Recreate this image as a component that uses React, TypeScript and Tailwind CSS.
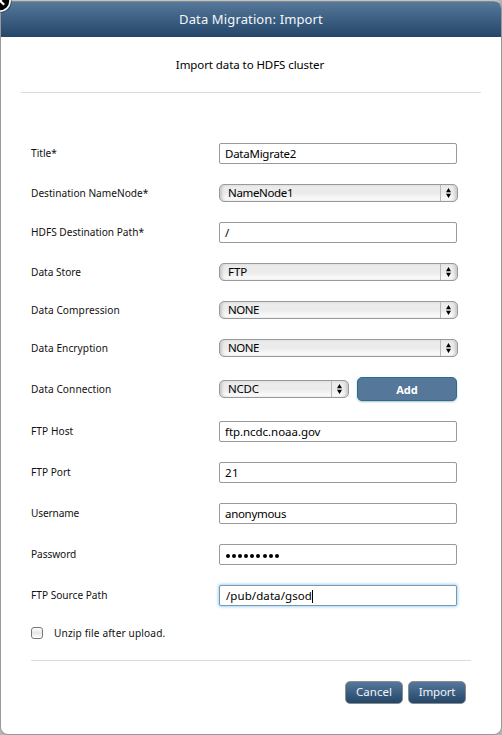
import React from 'react';

const labelFont = "font-['Noto_Sans',sans-serif] text-[11px] leading-none whitespace-nowrap text-[#111] origin-left scale-x-92 -translate-y-px";

function Row({ label, tracking = '', children }: { label: string; tracking?: string; children: React.ReactNode }) {
  return (
    <div className="flex items-center">
      <span className={`w-[188px] shrink-0 ${labelFont} ${tracking}`}>{label}</span>
      {children}
    </div>
  );
}

function Field({ value, tracking = '', focused = false }: { value: string; tracking?: string; focused?: boolean }) {
  return (
    <div
      className={`flex h-[21px] w-[238px] items-center rounded-[2px] border bg-white pt-px text-[11.5px] leading-none text-black ${
        focused ? 'border-[#7d98ad] pl-[6px] shadow-[0_0_3px_1px_#a4d5fa]' : 'border-[#999] pl-[5px]'
      }`}
    >
      <span className={`whitespace-nowrap ${tracking}`}>{value}</span>
      {focused && <span className="h-[13px] w-px bg-black" />}
    </div>
  );
}

function PasswordField() {
  return (
    <div className="flex h-[21px] w-[238px] items-center gap-[2.1px] rounded-[2px] border border-[#999] bg-white pt-[3px] pl-[6px]">
      {Array.from({ length: 9 }, (_, i) => (
        <span key={i} className="size-[4px] rounded-full bg-black" />
      ))}
    </div>
  );
}

function Select({ value, width = 'w-[239px]', tracking = '' }: { value: string; width?: string; tracking?: string }) {
  return (
    <div
      className={`flex h-[18px] items-stretch overflow-hidden rounded-[5px] border border-[#999] bg-linear-to-b from-[#ececec] via-[#ebebeb] to-white shadow-[inset_3px_0_3px_-1px_#c8c8c8,inset_-3px_0_3px_-1px_#c8c8c8] ${width}`}
    >
      <span className={`flex flex-1 items-center pl-[8px] text-[11.5px] leading-none text-black ${tracking}`}>{value}</span>
      <span className="flex w-[17px] items-center justify-center border-l border-[#b9b9b9] pr-px">
        <svg width="5" height="10" viewBox="0 0 5 10">
          <path d="M2.5 0L5 4.2H0ZM2.5 10L0 5.8H5Z" fill="#000" />
        </svg>
      </span>
    </div>
  );
}

function Action({ label, tracking }: { label: string; tracking: string }) {
  return (
    <button
      className={`h-[23px] w-[58px] rounded-[5px] border border-[#8c8c8c] bg-linear-to-b from-[#55789b] to-[#234669] pb-px text-[11.5px] leading-none text-[#f2f5f8] ${tracking}`}
    >
      {label}
    </button>
  );
}

export default function App() {
  return (
    <div className="relative h-[735px] w-[502px] overflow-hidden bg-[#b5b5b3] font-['Noto_Sans',sans-serif]">
      <div className="flex h-[735px] flex-col overflow-hidden rounded-[8px] rounded-tl-none border border-[#999] border-t-[#c3c3bb] bg-white">
        <header className="flex h-[36px] items-center justify-center border-t border-[#7d8b98] bg-linear-to-b from-[#55789b] to-[#234669] text-[13px] leading-none tracking-[0.13px] text-[#f4f7fa]">
          Data Migration: Import
        </header>
        <div className="mx-[20px] flex h-[56px] items-center justify-center border-b border-[#dcdcdc] pr-[2px] text-[11.5px] leading-none tracking-[-0.08px] text-black">
          Import data to HDFS cluster
        </div>
        <div className="mx-[30px] mt-[50px] flex flex-col gap-5">
          <Row label="Title*"><Field value="DataMigrate2" tracking="tracking-[-0.25px]" /></Row>
          <Row label="Destination NameNode*"><Select value="NameNode1" tracking="tracking-[-0.35px]" /></Row>
          <Row label="HDFS Destination Path*"><Field value="/" /></Row>
          <Row label="Data Store"><Select value="FTP" /></Row>
          <Row label="Data Compression" tracking="tracking-[0.08px]"><Select value="NONE" tracking="tracking-[-0.5px]" /></Row>
          <Row label="Data Encryption" tracking="tracking-[0.08px]"><Select value="NONE" tracking="tracking-[-0.5px]" /></Row>
          <Row label="Data Connection" tracking="tracking-[0.08px]">
            <Select value="NCDC" width="w-[130px]" tracking="tracking-[-0.2px]" />
            <button className="ml-[8px] h-[24px] w-[100px] rounded-[5px] border border-[#1f7391] bg-[#557799] text-[11px] leading-none font-bold text-white shadow-[0_1px_2px_#bbb]">
              Add
            </button>
          </Row>
          <Row label="FTP Host" tracking="tracking-[0.08px]"><Field value="ftp.ncdc.noaa.gov" tracking="tracking-[-0.05px]" /></Row>
          <Row label="FTP Port"><Field value="21" tracking="tracking-[0.4px]" /></Row>
          <Row label="Username" tracking="tracking-[-0.15px]"><Field value="anonymous" tracking="tracking-[-0.3px]" /></Row>
          <Row label="Password" tracking="tracking-[-0.08px]"><PasswordField /></Row>
          <Row label="FTP Source Path"><Field value="/pub/data/gsod" tracking="tracking-[0.08px]" focused /></Row>
          <div className="flex h-[14px] items-center">
            <span className="size-[12px] rounded-[3px] border border-[#777] bg-linear-to-b from-white via-[#e6e6e6] to-white" />
            <span className={`ml-[11px] ${labelFont} tracking-[0.15px]`}>Unzip file after upload.</span>
          </div>
        </div>
        <footer className="mx-[30px] mt-[20px] flex justify-end gap-[5px] border-t border-[#dcdcdc] pt-[20px] pr-[5px]">
          <Action label="Cancel" tracking="tracking-[0px]" />
          <Action label="Import" tracking="tracking-[-0.2px]" />
        </footer>
      </div>
      <svg className="absolute top-0 left-0" width="16" height="16" viewBox="0 0 16 16">
        <circle cx="0" cy="1" r="12" fill="#000" fillOpacity=".25" />
        <circle cx="0" cy="1" r="10" fill="#000" stroke="#fff" strokeWidth="1.6" />
        <path d="M-4 -3L4.2 4.8M4 -3L-4 5" stroke="#fff" strokeWidth="2.2" />
      </svg>
    </div>
  );
}
